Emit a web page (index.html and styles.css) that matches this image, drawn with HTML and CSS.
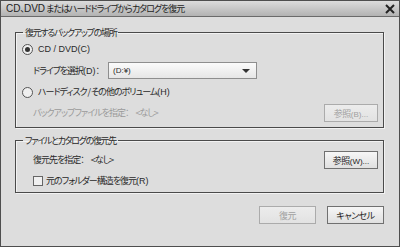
FILE: index.html
```html
<!DOCTYPE html>
<html lang="ja">
<head>
    <meta charset="UTF-8">
    <title>CD、DVD またはハードドライブからカタログを復元</title>
    <link rel="stylesheet" href="styles.css">
</head>
<body>
    <div class="window">
        <div class="titlebar">
            <span class="title"><span class="latin">CD</span>、<span class="latin">DVD</span> またはハードドライブからカタログを復元</span>
            <svg class="close" width="10" height="10" viewBox="0 0 10 10">
                <path d="M1 1 L9 9 M9 1 L1 9" stroke="#222" stroke-width="2"/>
            </svg>
        </div>

        <div class="content">
            <fieldset class="group group-source">
                <legend>復元するバックアップの場所</legend>

                <div class="row row-radio">
                    <span class="radio checked"></span>
                    <span class="latin">CD / DVD(C)</span>
                </div>

                <div class="row row-drive">
                    <span class="label">ドライブを選択<span class="latin">(D)</span>：</span>
                    <div class="select">
                        <span class="latin">(D:¥)</span>
                        <span class="arrow"></span>
                    </div>
                </div>

                <div class="row row-radio">
                    <span class="radio"></span>
                    <span>ハードディスク / その他のボリューム<span class="latin">(H)</span></span>
                </div>

                <div class="row row-file">
                    <span class="label disabled">バックアップファイルを指定：<span class="value">&lt;なし&gt;</span></span>
                    <button class="btn" disabled>参照<span class="latin">(B)...</span></button>
                </div>
            </fieldset>

            <fieldset class="group group-target">
                <legend>ファイルとカタログの復元先</legend>

                <div class="row row-file">
                    <span class="label">復元先を指定：<span class="value">&lt;なし&gt;</span></span>
                    <button class="btn">参照<span class="latin">(W)...</span></button>
                </div>

                <div class="row row-check">
                    <span class="checkbox"></span>
                    <span>元のフォルダー構造を復元<span class="latin">(R)</span></span>
                </div>
            </fieldset>

            <div class="footer">
                <button class="btn btn-wide" disabled>復元</button>
                <button class="btn btn-wide">キャンセル</button>
            </div>
        </div>
    </div>
</body>
</html>
```

FILE: styles.css
```css
* {
    margin: 0;
    padding: 0;
    box-sizing: border-box;
}

body {
    font-family: "Noto Sans CJK JP", "Noto Sans", sans-serif;
    font-feature-settings: "palt";
    font-size: 9px;
    letter-spacing: -1px;
    color: #2a2a2a;
    background: #dddddd;
}

/* 英数字 */
.latin {
    font-family: "Liberation Sans", "Noto Sans CJK JP", sans-serif;
    font-size: 9px;
    letter-spacing: 0;
}

.window {
    width: 400px;
    height: 247px;
    border: 1px solid #4e4e4e;
    background: #dddddd;
    display: flex;
    flex-direction: column;
}

.titlebar {
    height: 16px;
    display: flex;
    align-items: center;
    justify-content: space-between;
    padding: 0 4px 0 5px;
    background: linear-gradient(#dcdcdc, #b2b2b2);
    border-bottom: 1px solid #6a6a6a;
    flex-shrink: 0;
}

.title {
    line-height: 12px;
    color: #1e1e1e;
}

.title .latin {
    font-size: 10px;
}

.close {
    display: block;
}

.content {
    padding: 9px 15px 0 14px;
    display: flex;
    flex-direction: column;
}

/* グループ枠 */
.group {
    border: 1px solid #4a4a4a;
    box-shadow: inset 1px 1px 0 #f2f2f2, 1px 1px 0 #f2f2f2;
    padding: 0 5px 5px 5px;
    display: flex;
    flex-direction: column;
}

.group legend {
    margin-left: 2px;
    padding: 0 2px;
    line-height: 13px;
    letter-spacing: -1.3px;
}

.group-target {
    margin-top: 6px;
    padding-bottom: 4px;
}

.row {
    display: flex;
    align-items: center;
    line-height: 14px;
    white-space: nowrap;
}

.row-radio {
    height: 14px;
    margin-top: 6px;
    gap: 5px;
}

.group-source .row-radio:first-of-type {
    margin-top: 3px;
}

.row-drive {
    height: 17px;
    margin-top: 6px;
    padding-left: 12px;
}

.row-drive .label {
    width: 75px;
    flex-shrink: 0;
}

.row-file {
    height: 18px;
    margin-top: 5px;
    padding-left: 12px;
    justify-content: space-between;
}

.row-file .value {
    margin-left: 7px;
}

.group-target .row-file {
    margin-top: 4px;
}

.row-check {
    height: 14px;
    margin-top: 5px;
    padding-left: 12px;
    gap: 3px;
}

.disabled {
    color: #9a9a9a;
}

.radio {
    width: 11px;
    height: 11px;
    border-radius: 50%;
    border: 1px solid #555;
    background: #efefef;
    position: relative;
    margin-left: 1px;
}

.radio.checked::after {
    content: "";
    position: absolute;
    left: 2px;
    top: 2px;
    width: 5px;
    height: 5px;
    border-radius: 50%;
    background: #333;
}

.checkbox {
    width: 10px;
    height: 10px;
    border: 1px solid #666;
    background: #f0f0f0;
}

.select {
    width: 149px;
    height: 17px;
    border: 1px solid #8e8e8e;
    background: linear-gradient(#fbfbfb, #e6e6e6);
    display: flex;
    align-items: center;
    justify-content: space-between;
    padding: 0 6px 0 4px;
}

.select .latin {
    font-size: 8px;
}

.arrow {
    width: 0;
    height: 0;
    border-left: 4px solid transparent;
    border-right: 4px solid transparent;
    border-top: 4px solid #333;
}

.btn {
    width: 54px;
    height: 18px;
    font-family: inherit;
    font-feature-settings: "palt";
    font-size: 9px;
    letter-spacing: -0.5px;
    color: #222;
    border: 1px solid #707070;
    background: linear-gradient(#f6f6f6, #e0e0e0);
}

.btn .latin {
    font-size: 8px;
}

.btn:disabled {
    color: #a0a0a0;
    border-color: #ababab;
    background: linear-gradient(#ececec, #e2e2e2);
}

.footer {
    display: flex;
    justify-content: flex-end;
    gap: 11px;
    margin-top: 13px;
}

.btn-wide {
    width: 57px;
}
```
